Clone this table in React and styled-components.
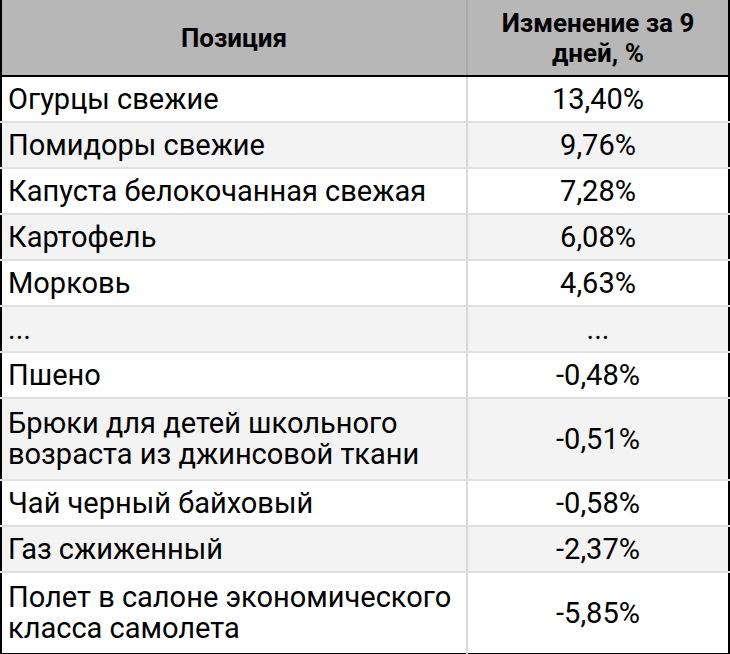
import React from 'react';
import styled, { createGlobalStyle } from 'styled-components';

const GlobalStyle = createGlobalStyle`
  html, body {
    margin: 0;
    padding: 0;
    background: #ffffff;
  }
`;

const Table = styled.table`
  width: 730px;
  border-collapse: collapse;
  table-layout: fixed;
  font-family: Roboto, "Noto Sans", sans-serif;
  color: #000000;
  border-left: 2px solid #000000;
  border-right: 2px solid #000000;
  border-bottom: 2px solid #000000;
`;

const HeadCell = styled.th`
  height: 76px;
  padding: 0 8px;
  box-sizing: border-box;
  background: #b7b7b7;
  font-size: 26px;
  line-height: 30px;
  font-weight: 700;
  text-align: center;
  vertical-align: middle;
  border-bottom: 2px solid #000000;
  border-right: 2px solid #a9a9a9;
  &:last-child {
    border-right: none;
  }
`;

const Row = styled.tr`
  background: ${(p) => (p.$shaded ? '#f3f3f3' : '#ffffff')};
  border-bottom: 2px solid #e0e0e0;
  &:last-child {
    border-bottom: 2px solid #000000;
  }
`;

const Cell = styled.td`
  height: ${(p) => (p.$tall ? 82 : 46)}px;
  padding: 0 6px;
  box-sizing: border-box;
  font-size: 29px;
  line-height: 31px;
  text-align: ${(p) => (p.$center ? 'center' : 'left')};
  vertical-align: middle;
  border-right: 2px solid #d9d9d9;
  &:last-child {
    border-right: none;
  }
`;

const rows = [
  { name: 'Огурцы свежие', value: '13,40%' },
  { name: 'Помидоры свежие', value: '9,76%' },
  { name: 'Капуста белокочанная свежая', value: '7,28%' },
  { name: 'Картофель', value: '6,08%' },
  { name: 'Морковь', value: '4,63%' },
  { name: '...', value: '...' },
  { name: 'Пшено', value: '-0,48%' },
  { name: 'Брюки для детей школьного возраста из джинсовой ткани', value: '-0,51%', tall: true },
  { name: 'Чай черный байховый', value: '-0,58%' },
  { name: 'Газ сжиженный', value: '-2,37%' },
  { name: 'Полет в салоне экономического класса самолета', value: '-5,85%', tall: true },
];

const App = () => (
  <>
    <GlobalStyle />
    <Table>
      <colgroup>
        <col style={{ width: '466px' }} />
        <col />
      </colgroup>
      <thead>
        <tr>
          <HeadCell>Позиция</HeadCell>
          <HeadCell>Изменение за 9 дней, %</HeadCell>
        </tr>
      </thead>
      <tbody>
        {rows.map((r, i) => (
          <Row key={i} $shaded={i % 2 === 1}>
            <Cell $tall={r.tall}>{r.name}</Cell>
            <Cell $tall={r.tall} $center>{r.value}</Cell>
          </Row>
        ))}
      </tbody>
    </Table>
  </>
);

export default App;
